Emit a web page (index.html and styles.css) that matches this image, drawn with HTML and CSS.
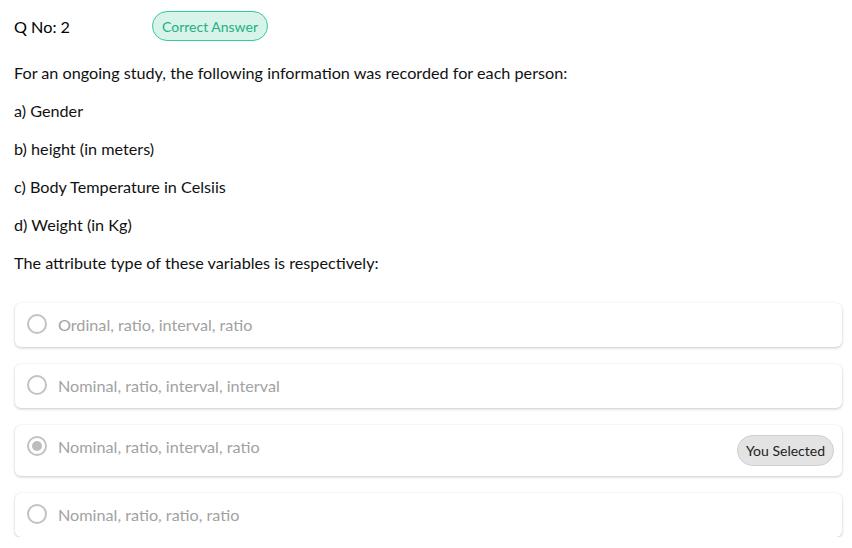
FILE: index.html
```html
<!DOCTYPE html>
<html>
<head>
<meta charset="utf-8">
<link rel="stylesheet" href="styles.css">
</head>
<body>
<div class="page">
  <div class="header">
    <div class="qno">Q No: 2</div>
    <div class="badge-correct">Correct Answer</div>
  </div>
  <div class="question">
    <p>For an ongoing study, the following information was recorded for each person:</p>
    <p>a) Gender</p>
    <p>b) height (in meters)</p>
    <p>c) Body Temperature in Celsiis</p>
    <p>d) Weight (in Kg)</p>
    <p>The attribute type of these variables is respectively:</p>
  </div>
  <div class="options">
    <div class="option">
      <div class="choice"><span class="radio"></span><span class="label">Ordinal, ratio, interval, ratio</span></div>
    </div>
    <div class="option">
      <div class="choice"><span class="radio"></span><span class="label">Nominal, ratio, interval, interval</span></div>
    </div>
    <div class="option">
      <div class="choice"><span class="radio checked"></span><span class="label">Nominal, ratio, interval, ratio</span></div>
      <div class="badge-selected">You Selected</div>
    </div>
    <div class="option">
      <div class="choice"><span class="radio"></span><span class="label">Nominal, ratio, ratio, ratio</span></div>
    </div>
  </div>
</div>
</body>
</html>
```

FILE: styles.css
```css
* { box-sizing: border-box; }
body {
  margin: 0;
  font-family: Lato, "Open Sans", sans-serif;
  font-size: 16.2px;
  color: #111;
  background: #fff;
}
.page {
  padding: 11px 10px 0 14px;
}
.header {
  display: flex;
  align-items: center;
  height: 30px;
}
.qno {
  width: 138px;
  font-size: 16.2px;
  color: #000;
}
.badge-correct {
  height: 30px;
  padding: 0 9px;
  display: flex;
  align-items: center;
  border: 1px solid #35c99b;
  background: #d7f3ea;
  color: #22b27f;
  border-radius: 15px;
  font-size: 14px;
}
.question {
  margin-top: 21px;
}
.question p {
  margin: 0 0 16px 0;
  line-height: 22px;
}
.options {
  margin-top: 29px;
  display: flex;
  flex-direction: column;
  gap: 17px;
  margin-left: 1px;
}
.option {
  display: flex;
  justify-content: space-between;
  align-items: flex-start;
  min-height: 44px;
  padding: 10px 8px 10px 12px;
  border-radius: 6px;
  background: #fff;
  box-shadow: 0 1px 3px rgba(0,0,0,0.22), 0 0 1px rgba(0,0,0,0.06);
}
.choice {
  display: flex;
  align-items: center;
  height: 24px;
  margin-top: -1px;
  gap: 11px;
}
.radio {
  width: 20px;
  height: 20px;
  border: 2px solid #c2c2c2;
  border-radius: 50%;
  display: flex;
  align-items: center;
  justify-content: center;
}
.radio.checked::after {
  content: "";
  width: 10px;
  height: 10px;
  border-radius: 50%;
  background: #bdbdbd;
}
.label {
  color: #a2a2a2;
  font-size: 16.2px;
}
.badge-selected {
  height: 31px;
  padding: 0 8px;
  display: flex;
  align-items: center;
  background: #e3e3e3;
  border: 1px solid #cfcfcf;
  border-radius: 16px;
  color: #222;
  font-size: 14px;
}
```
